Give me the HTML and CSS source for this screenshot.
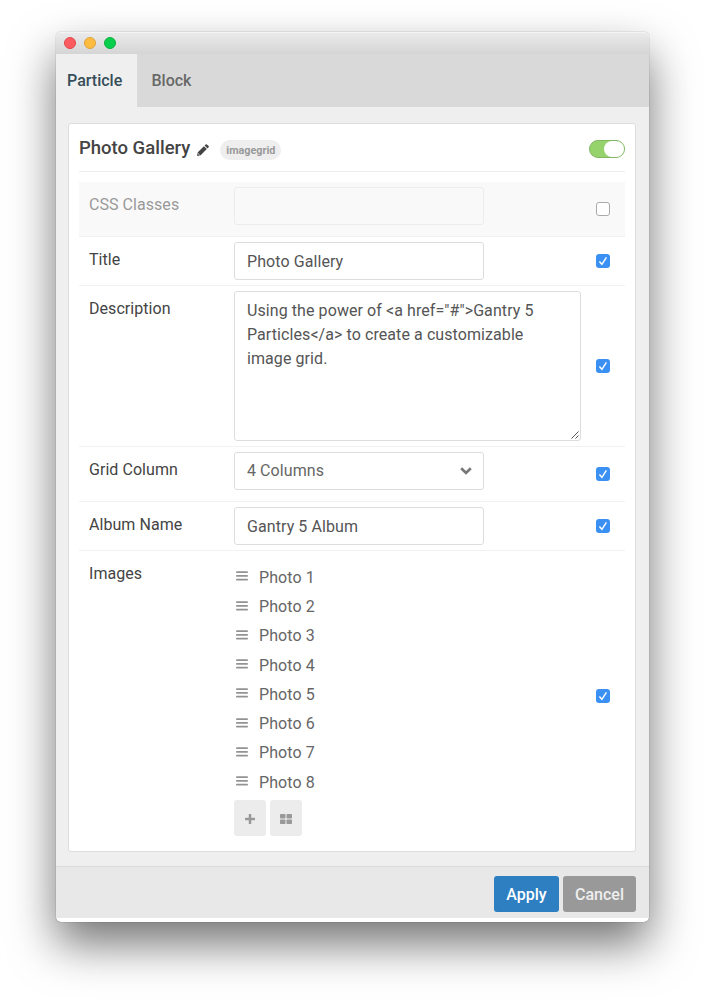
FILE: index.html
```html
<!DOCTYPE html>
<html lang="en">
<head>
<meta charset="utf-8">
<title>Photo Gallery</title>
<link rel="stylesheet" href="styles.css">
</head>
<body>
<svg class="defs" width="0" height="0" aria-hidden="true">
  <symbol id="check" viewBox="0 0 14 14"><path d="M3.4 7.6l2.5 2.7 4.5-7" fill="none" stroke="#fff" stroke-width="1.4"/></symbol>
  <symbol id="bars" viewBox="0 0 12 10"><path d="M.8 1.1h10.4M.8 4.9h10.4M.8 8.7h10.4" stroke="#939393" stroke-width="1.7" stroke-linecap="round"/></symbol>
</svg>
<div class="window">
  <div class="titlebar"><i class="dot red"></i><i class="dot yellow"></i><i class="dot green"></i></div>
  <nav class="tabs"><a class="tab active">Particle</a><a class="tab">Block</a></nav>
  <main class="content">
    <section class="card">
      <header class="card-head">
        <h4 class="title">Photo Gallery</h4>
        <svg class="pencil" viewBox="0 0 12 12"><path d="M0 12l.8-3.7L6.9 2.2l2.9 2.9-6.1 6.1zM7.6 1.5L8.7.4q.6-.5 1.2 0l1.7 1.7q.5.6 0 1.2L10.5 4.4z" fill="#444"/><path d="M1.2 9.5l1.3 1.3" stroke="#fff" stroke-width=".9"/></svg>
        <span class="badge">imagegrid</span>
        <span class="toggle"><i class="knob"></i></span>
      </header>
      <div class="row disabled tall"><label class="label">CSS Classes</label><div class="field"></div><span class="check"></span></div>
      <div class="row"><label class="label">Title</label><div class="field">Photo Gallery</div><span class="check on"><svg><use href="#check"/></svg></span></div>
      <div class="row"><label class="label">Description</label><div class="field area">Using the power of &lt;a href="#"&gt;Gantry 5<br>Particles&lt;/a&gt; to create a customizable<br>image grid.<svg class="grip" viewBox="0 0 8 8"><path d="M.5 7.5l7-7M4.5 7.5l3-3" stroke="#555" stroke-width="1"/></svg></div><span class="check on"><svg><use href="#check"/></svg></span></div>
      <div class="row tall"><label class="label">Grid Column</label><div class="field select">4 Columns<svg class="chevron" viewBox="0 0 12 8"><path d="M1.2 1.2L6 5.9l4.8-4.7" fill="none" stroke="#777" stroke-width="2.7"/></svg></div><span class="check on"><svg><use href="#check"/></svg></span></div>
      <div class="row"><label class="label">Album Name</label><div class="field">Gantry 5 Album</div><span class="check on"><svg><use href="#check"/></svg></span></div>
      <div class="row last"><label class="label">Images</label>
        <div class="images">
          <ul class="list">
            <li class="item"><svg class="bars"><use href="#bars"/></svg>Photo 1</li>
            <li class="item"><svg class="bars"><use href="#bars"/></svg>Photo 2</li>
            <li class="item"><svg class="bars"><use href="#bars"/></svg>Photo 3</li>
            <li class="item"><svg class="bars"><use href="#bars"/></svg>Photo 4</li>
            <li class="item"><svg class="bars"><use href="#bars"/></svg>Photo 5</li>
            <li class="item"><svg class="bars"><use href="#bars"/></svg>Photo 6</li>
            <li class="item"><svg class="bars"><use href="#bars"/></svg>Photo 7</li>
            <li class="item"><svg class="bars"><use href="#bars"/></svg>Photo 8</li>
          </ul>
          <div class="tools">
            <span class="tool"><svg width="10" height="10" viewBox="0 0 10 10"><path d="M5 .8v8.4M.8 5h8.4" stroke="#999" stroke-width="2.5" stroke-linecap="round"/></svg></span>
            <span class="tool"><svg width="12" height="10" viewBox="0 0 12 10" fill="#999"><rect width="5.5" height="4.5" rx=".8"/><rect x="6.5" width="5.5" height="4.5" rx=".8"/><rect y="5.5" width="5.5" height="4.5" rx=".8"/><rect x="6.5" y="5.5" width="5.5" height="4.5" rx=".8"/></svg></span>
          </div>
        </div>
        <span class="check on"><svg><use href="#check"/></svg></span></div>
    </section>
  </main>
  <footer class="footer"><button class="btn primary">Apply</button><button class="btn">Cancel</button></footer>
</div>
</body>
</html>
```
FILE: styles.css
```css
* { box-sizing: border-box; }
body { margin: 0; padding: 32px 56px 0; height: 1002px; overflow: hidden; background: #fff; font: 16px/24px Roboto, "Liberation Sans", sans-serif; color: #444; }
.defs { position: absolute; }
.window { width: 593px; height: 890px; padding-bottom: 4px; display: flex; flex-direction: column; border-radius: 5px; background: #fff; box-shadow: 0 0 1px rgba(0,0,0,.6), 0 22px 46px rgba(0,0,0,.55); }
.titlebar { height: 22px; padding: 5px 8px; display: flex; gap: 8px; border-radius: 5px 5px 0 0; background: linear-gradient(#ebebeb, #d5d5d5); box-shadow: inset 0 1px #f4f4f4; }
.dot { width: 12px; height: 12px; border-radius: 50%; border: 1px solid #e2474b; background: #fc5b5f; }
.yellow { border-color: #e0a33a; background: #fdbc40; }
.green { border-color: #0fb040; background: #07ce4b; }
.tabs { height: 53px; display: flex; background: #d9d9d9; }
.tab { padding: 15px 14.5px 0; font-weight: 500; color: #686868; }
.active { width: 81px; padding-left: 11px; background: #efefef; color: #354d59; }
.content { height: 759px; padding: 16px 13px 0 12px; background: #efefef; }
.card { height: 729px; padding: 10px; border: 1px solid #ddd; border-radius: 3px; background: #fff; }
.card-head { height: 38px; margin-bottom: 10px; display: flex; align-items: center; padding-bottom: 8px; border-bottom: 1px solid #eee; }
.title { margin: -2px 0 0; font-size: 18.5px; line-height: 28px; font-weight: 500; color: #444; }
.pencil { width: 12px; height: 12px; margin: 2px 11px 0 7px; }
.badge { width: 61px; height: 20px; margin-top: 3px; border-radius: 10px; background: #eee; color: #999; font-size: 10.8px; line-height: 21px; font-weight: 700; text-align: center; }
.toggle { width: 36px; height: 18px; margin: 1px 0 0 auto; border: 1px solid #83b763; border-radius: 9px; background: #96d36c; display: flex; justify-content: flex-end; }
.knob { width: 20px; height: 16px; border-radius: 8px; background: #fff; }
.row { display: flex; padding: 5px 15px 5px 10px; border-bottom: 1px solid #f1f1f1; }
.row.tall { padding-bottom: 11px; }
.row.last { border: 0; padding: 11px 15px 5px 10px; height: 290px; }
.label { width: 145px; padding-top: 6px; letter-spacing: .05px; }
.last .label { padding-top: 0; }
.disabled { background: #f9f9f9; }
.disabled .label { color: #999; }
.field { width: 250px; height: 38px; padding: 7px 12px; border: 1px solid #ddd; border-radius: 3px; background: #fff; color: #555; letter-spacing: .08px; }
.disabled .field { background: #f9f9f9; border-color: #ececec; }
.area { position: relative; width: 347px; height: 150px; }
.grip { position: absolute; right: 1px; bottom: 1px; width: 8px; height: 8px; }
.select { display: flex; justify-content: space-between; padding: 6px 11px 5px 12px; color: #666; }
.chevron { width: 12px; height: 8px; margin-top: 8px; }
.check { width: 14px; height: 14px; margin-left: auto; align-self: center; border: 1px solid #aaa; border-radius: 3px; background: #fff; }
.check.on { border: 0; background: #3b91f3; }
.check svg { display: block; width: 14px; height: 14px; }
.tall .check { margin-top: 6px; }
.last .check { margin-top: -6px; }
.list { margin: 0; padding: 0; list-style: none; }
.item { height: 29.25px; display: flex; align-items: center; padding-top: 2.4px; color: #666; line-height: 26px; letter-spacing: .08px; }
.bars { width: 12px; height: 10px; margin: -3px 11px 0 2px; }
.tools { display: flex; gap: 4px; margin-top: 4px; }
.tool { width: 32px; height: 36px; padding-top: 1px; display: flex; align-items: center; justify-content: center; border-radius: 3px; background: #ececec; }
.footer { height: 52px; padding: 9px 13px 0; display: flex; justify-content: flex-end; gap: 4px; border-top: 1px solid #dadada; background: #e8e8e8; }
.btn { width: 73px; height: 36px; padding: 1px 0 0; border: 0; border-radius: 3px; background: #999; color: #eee; font: 500 16px/35px Roboto, sans-serif; }
.primary { width: 65px; background: #2d7fc2; color: #fff; }
```
